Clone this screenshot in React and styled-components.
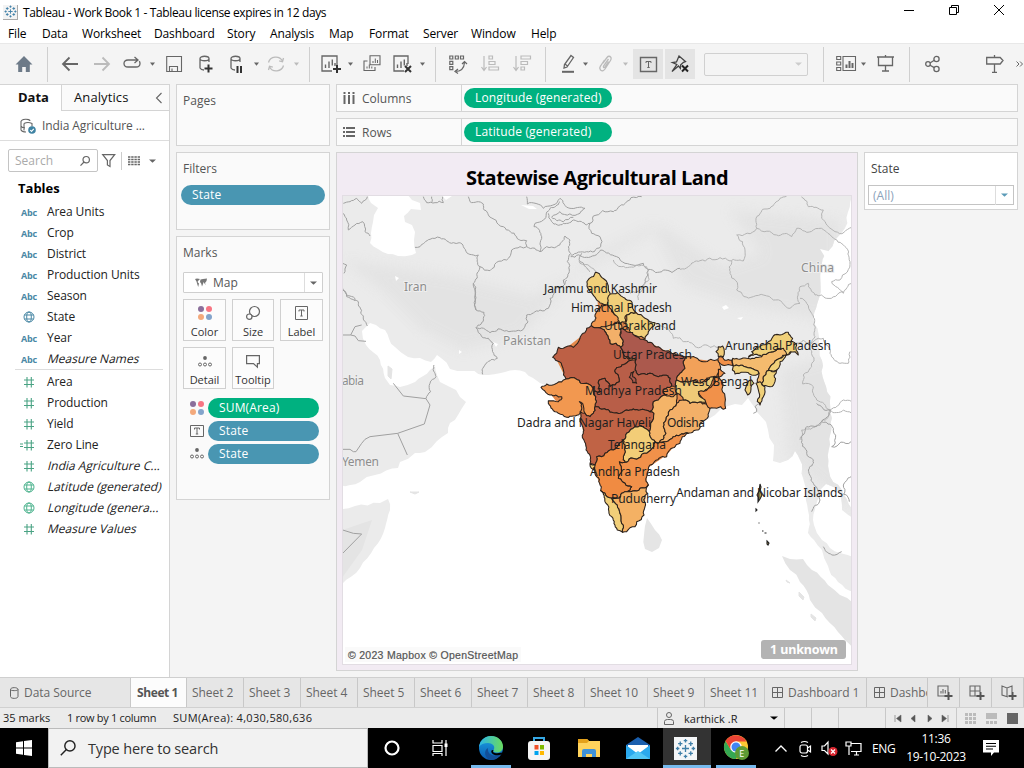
import React from 'react';
import styled, { createGlobalStyle, css } from 'styled-components';

const Global = createGlobalStyle`
  * { box-sizing: border-box; }
  body { margin: 0; overflow: hidden; background: #f4f4f4; }
`;

const ui = '"Open Sans", "Noto Sans", sans-serif';
const line = '#d4d4d4';

const Screen = styled.div`
  width: 1024px; height: 768px; display: flex; flex-direction: column;
  font-family: ${ui}; font-size: 12px; color: #333; background: #f4f4f4;
  white-space: nowrap; overflow: hidden;
`;
const Svg = styled.svg`
  display: block; flex: none; overflow: visible; fill: none;
  stroke: ${p => p.$c || '#666'}; stroke-width: ${p => p.$sw || 1.3};
`;
const Ico = ({ w = 18, h = 18, ...p }) => <Svg width={w} height={h} viewBox={`0 0 ${w} ${h}`} {...p} />;

/* window chrome */
const TitleBar = styled.header`
  height: 24px; flex: none; display: flex; align-items: center; background: #fff; color: #000;
  padding: 0 20px 0 3px; gap: 5px; letter-spacing: -0.37px;
`;
const AppBadge = styled.div`
  width: 15px; height: 15px; display: grid; place-items: center; background: #f3f3f3;
  border-right: 1px solid #aaa; border-bottom: 1px solid #aaa;
`;
const WinButtons = styled.div`
  margin-left: auto; display: flex; align-items: center; gap: 35px; padding-bottom: 4px;
`;
const MenuBar = styled.nav`
  height: 19px; flex: none; display: flex; background: #fff; color: #000; padding-left: 8px;
`;
const MenuItem = styled.span`
  width: ${p => p.$w}px; line-height: 20px; letter-spacing: -0.13px;
`;
const Toolbar = styled.div`
  height: 41px; flex: none; display: flex; align-items: center; border-top: 1px solid #e8e8e8;
`;
const Tool = styled.div`
  width: ${p => p.$w}px; margin-left: ${p => p.$gap}px; flex: none;
  display: flex; align-items: center; justify-content: center; height: 18px;
`;
const Separator = styled.div`
  width: 1px; height: 35px; flex: none; margin-left: ${p => p.$gap}px; background: #cfcfcf;
`;
const Pressed = styled.div`
  width: 30px; height: 30px; flex: none; margin-left: ${p => p.$gap}px; background: #e4e4e4;
  display: grid; place-items: center;
`;
const FitSelect = styled.div`
  width: 104px; height: 23px; flex: none; margin-left: 9px; border: 1px solid #d0d0d0; border-radius: 2px;
  display: flex; align-items: center; justify-content: flex-end; padding-right: 5px;
`;

/* workspace */
const Workspace = styled.div` height: 593px; flex: none; display: flex; `;
const DataPane = styled.aside`
  width: 170px; flex: none; background: #fff; border-right: 1px solid ${line}; color: #222;
`;
const PaneTabs = styled.div` height: 27px; display: flex; `;
const PaneTab = styled.div`
  font-size: 13px; color: #111; line-height: 25px; border-top: 1px solid ${line};
  ${p => p.$active ? css`
    width: 61px; padding-left: 18px; font-weight: 700; background: #fff;
  ` : css`
    flex: 1; padding: 0 7px 0 12px; background: #fafafa; border-left: 1px solid ${line}; border-bottom: 1px solid ${line};
    display: flex; align-items: center; justify-content: space-between; letter-spacing: 0.1px;
  `}
`;
const Source = styled.div`
  height: 30px; display: flex; align-items: center; gap: 6px; padding-left: 20px;
  border-bottom: 1px solid #ddd; color: #555; letter-spacing: -0.1px;
`;
const SearchRow = styled.div` display: flex; align-items: center; padding: 8px 0 0 8px; height: 31px; `;
const SearchBox = styled.div`
  width: 90px; height: 23px; border: 1px solid #c4c4c4; border-radius: 2px; color: #aaa;
  display: flex; align-items: center; justify-content: space-between; padding: 0 7px 0 6px; margin-right: 4px;
`;
const ThinRule = styled.div` width: 1px; height: 18px; background: #ccc; margin: 0 6px 0 5px; `;
const TablesTitle = styled.div`
  font-size: 13px; font-weight: 700; color: #000; padding-left: 18px; height: 29px; line-height: 33px;
`;
const Fields = styled.div`
  ${p => p.$ruled && css`
    margin: 0 6px 0 15px; border-top: 1px solid #ddd; padding-top: 1px;
    & > div { margin-left: -15px; }
  `}
`;
const Field = styled.div` height: 21px; display: flex; align-items: center; padding-left: 20px; gap: 9px; `;
const FieldName = styled.span`
  display: inline-block; letter-spacing: -0.08px;
  ${p => p.$slanted && css` transform: skewX(-14deg); letter-spacing: 0.02px; padding-left: 1px; `}
`;
const Abc = styled.span`
  width: 18px; font-size: 9px; font-weight: 700; color: #4a88a5; text-align: center; padding-top: 2px; letter-spacing: -0.2px;
`;
const FieldIcon = styled.span` width: 18px; display: grid; place-items: center; `;

const Shelves = styled.div` width: 154px; margin-left: 6px; flex: none; display: flex; flex-direction: column; gap: 6px; `;
const Card = styled.section`
  height: ${p => p.$h}px; flex: none; background: #fafafa; border: 1px solid ${line}; padding: 0 4px;
`;
const CardTitle = styled.div` height: 32px; line-height: 31px; padding-left: 2px; color: #555; `;
const Pill = styled.div`
  height: 20px; border-radius: 10px; width: ${p => p.$w}px; line-height: 20px; padding-left: 11px;
  background: ${p => p.$green ? '#00b180' : '#4996b2'}; color: #fff; letter-spacing: ${p => p.$ls || 0.15}px;
`;
const MarkType = styled.div`
  margin: 3px 2px 0; width: 140px; height: 21px; border: 1px solid #cfcfcf; border-radius: 1px; background: #fff;
  display: flex; align-items: center; padding-left: 11px; gap: 6px; color: #555;
`;
const MarkCaret = styled.div`
  margin-left: auto; width: 18px; height: 19px; border-left: 1px solid #ddd; display: grid; place-items: center;
`;
const MarkButtons = styled.div`
  display: grid; grid-template-columns: 43px 42px 43px; gap: 6px; margin: 6px 2px 7px;
`;
const MarkButton = styled.div`
  height: 42px; border: 1px solid #d0d0d0; background: #fcfcfc; display: flex; flex-direction: column;
  align-items: center; justify-content: space-between; padding-top: 6px; font-size: 11px; line-height: 17px; color: #333;
`;
const Encoding = styled.div` display: flex; align-items: center; height: 23px; padding-left: 9px; gap: 4px; `;

const Main = styled.main` margin-left: 6px; width: 682px; display: flex; flex-direction: column; gap: 6px; `;
const Shelf = styled.div`
  height: 28px; flex: none; border: 1px solid ${line}; background: #fafafa; display: flex; align-items: center; color: #555;
`;
const ShelfName = styled.div`
  width: 125px; height: 26px; border-right: 1px solid ${line}; display: flex; align-items: center;
  gap: 7px; padding-left: 6px; margin-right: 2px;
`;
const Stage = styled.div` display: flex; gap: 6px; `;
const Sheet = styled.section`
  width: 522px; height: 519px; border: 1px solid ${line}; background: #f2ebf3; padding: 0 5px;
`;
const SheetTitle = styled.h1`
  margin: 0; height: 42px; text-align: center; font: 700 20px/49px ${ui}; color: #000; letter-spacing: -0.5px;
`;
const MapFrame = styled.div` width: 510px; height: 470px; border: 1px solid #e2dde3; background: #fff; overflow: hidden; `;
const MapSvg = styled.svg`
  display: block; font-family: "Noto Sans", "Open Sans", sans-serif;
  .state { stroke: #2c221c; stroke-width: 3.2; stroke-linejoin: round; }
`;
const FilterCard = styled.section` width: 154px; height: 58px; border: 1px solid ${line}; background: #fff; padding: 0 2px 0 3px; `;
const FilterTitle = styled.div` height: 32px; line-height: 31px; padding-left: 3px; color: #444; `;
const FilterSelect = styled.div`
  width: 146px; height: 20px; border: 1px solid #c4c4c4; display: flex; align-items: center; padding-left: 4px; color: #8ca3bb;
`;

/* footer */
const SheetTabs = styled.div`
  height: 31px; flex: none; display: flex; background: #e6e6e6; border-top: 1px solid #cfcfcf; border-bottom: 1px solid #d0d0d0;
`;
const SheetTab = styled.div`
  width: ${p => p.$w}px; flex: none; height: 29px; border-right: 1px solid #c8c8c8; overflow: hidden;
  display: flex; align-items: center; gap: 5px; padding-left: ${p => p.$pl ?? 5}px; color: #666; letter-spacing: -0.05px;
  ${p => p.$active && css` background: #fcfcfc; font-weight: 700; color: #555; letter-spacing: -0.4px; `}
`;
const Status = styled.div`
  height: 20px; flex: none; display: flex; background: #ebebeb; color: #222; font-size: 11px; line-height: 19px; padding-left: 3px;
`;
const Stat = styled.span` width: ${p => p.$w}px; letter-spacing: ${p => p.$ls || 0}px; `;
const Cell = styled.div`
  width: ${p => p.$w}px; border-left: 1px solid #c8c8c8; display: flex; align-items: center; gap: ${p => p.$gap || 0}px;
  padding: 0 ${p => p.$px || 0}px; flex: none;
`;
const Grow = styled.span` flex: 1; `;

const Taskbar = styled.footer` height: 40px; flex: none; display: flex; align-items: center; background: #000; color: #fff; `;
const Task = styled.div`
  width: ${p => p.$w}px; height: 40px; flex: none; display: grid; place-items: center;
  background: ${p => p.$on ? '#333' : 'transparent'};
  box-shadow: ${p => p.$run ? 'inset 0 -3px #76b9ed' : 'none'};
  margin-left: ${p => p.$ml || 0}px;
`;
const TaskSearch = styled.div`
  width: 320px; height: 40px; flex: none; background: #f2f2f2; border: 1px solid #bbb; color: #333; font-size: 14.5px;
  display: flex; align-items: center; gap: 12px; padding-left: 11px; letter-spacing: -0.17px;
`;
const Clock = styled.div`
  width: 62px; flex: none; margin-left: 7px; text-align: center; line-height: 18px; font-size: 12px; letter-spacing: -0.3px;
`;
const Lang = styled.div` width: 26px; flex: none; margin-left: 10px; font-size: 12px; letter-spacing: -0.4px; `;

/* small drawings */
const Caret = ({ c = '#666', s = 5 }) => (
  <Ico w={s} h={4} $c="none"><path d={`M0 .5h${s}L${s / 2} 3.8z`} fill={c} /></Ico>
);
const Plus = ({ x, y, c = '#333' }) => <path d={`M${x - 4} ${y}h8M${x} ${y - 4}v8`} stroke={c} strokeWidth="2" />;
const Cylinder = () => <path d="M2 3.5C2 .5 11 .5 11 3.5S2 6.500 2 3.500V13q1 2 4 2M11 3.500V7" />;
const TBox = ({ w = 14, h = 12, sw }) => (
  <Ico w={w} h={h} $sw={sw || 1}>
    <path d={`M.5 .5h${w - 1}v${h - 1}H.5z`} />
    <path d={`M${w / 2 - 2.5} ${h / 2 - 1.5}v-1.500h5v1.500M${w / 2} ${h / 2 - 3}v6M${w / 2 - 1.2} ${h / 2 + 3}h2.400`} strokeWidth="1" />
  </Ico>
);
const sparkPath = 'M12 8v8M8 12h8M12 1v4M10 3h4M12 19v4M10 21h4M1 12h4M3 10v4M19 12h4M21 10v4M6 4v5M3.500 6.500h5M18 4v5M15.500 6.500h5M6 15v5M3.500 17.500h5M18 15v5M15.500 17.500h5';
const Spark = ({ s = 15 }) => (
  <Svg width={s} height={s} viewBox="0 0 24 24" $c="#3f7fa8" $sw="1.7"><path d={sparkPath} /></Svg>
);
const Colors = () => (
  <Ico w={14} h={14} $c="none">
    <circle cx="3" cy="3" r="3" fill="#8b6f9b" /><circle cx="11" cy="3" r="3" fill="#f77583" />
    <circle cx="3" cy="11" r="3" fill="#f3a97c" /><circle cx="11" cy="11" r="3" fill="#83a4cb" />
  </Ico>
);
const Dots = ({ h = 11, y = 0 }) => (
  <Ico w={14} h={h} $sw="1">
    <circle cx="7" cy={2 + y} r="1.900" fill="#666" stroke="none" />
    <circle cx="2" cy={8.5 + y} r="1.500" /><circle cx="7" cy={8.5 + y} r="1.500" /><circle cx="12" cy={8.5 + y} r="1.500" />
  </Ico>
);
const Hash = ({ eq }) => (
  <Ico w={18} h={12} $c="#4aa384" $sw="1.100">
    <path d="M4 4h10M4 8.500h10M7 1v10.500M11.300 1v10.500" />{eq && <path d="M0 5h3M0 7.500h3" />}
  </Ico>
);
const Globe = ({ c }) => (
  <Ico w={12} h={12} $c={c} $sw="1"><circle cx="6" cy="6" r="5" /><ellipse cx="6" cy="6" rx="2.300" ry="5" /><path d="M1.500 4h9M1.500 8h9" /></Ico>
);
const Lens = ({ c = '#666', s = 10 }) => (
  <Svg width={s} height={s} viewBox="0 0 10 10" $c={c} $sw={s > 12 ? 0.9 : 1.2}><circle cx="6.200" cy="3.700" r="3.200" /><path d="M4 6L.5 9.600" /></Svg>
);
const SheetGlyph = ({ mark }) => (
  <Ico w={20} h={18}>
    <path d={mark ? 'M11 16H1V1h14v8' : 'M11 16H1V1h15v9'} />
    <path d="M4.500 9.500v3.500M8 6.500v6.500M11.300 4.500v6M14 8v3" strokeWidth="1.400" />
    {mark ? <path d="M12 11l6 6M18 11l-6 6" stroke="#333" strokeWidth="2" /> : <Plus x={16} y={14} />}
  </Ico>
);
const DashGlyph = () => <Ico w={11} h={11} $sw="1"><path d="M.5 .5h10v10H.5zM5.500 .5v10M.5 5.500h10" /></Ico>;

const tools = {
  home: <Ico $c="none"><path d="M9 1L.5 9.500h2.700V17h4v-5h3.600v5h4V9.500h2.700z" fill="#6d7a88" /></Ico>,
  back: <Ico w={16} $sw="1.800"><path d="M16 9H1M7.500 2.500L1 9l6.500 6.500" /></Ico>,
  fwd: <Ico w={16} $sw="1.800" $c="#bbb"><path d="M0 9h15M8.500 2.500L15 9l-6.500 6.500" /></Ico>,
  loop: <Ico $sw="1.300"><path d="M14 5H5Q1 5 1 8.500T5 12h8q4 0 4-3.500 0-1.500-.8-2.200M11.500 2L15 5l-3.500 3" /></Ico>,
  save: <Ico w={16}><path d="M.7 1.500h14.800v15H.7zM3.500 16v-4.500h8V16M6 16v-2.500" strokeWidth="1.100" /></Ico>,
  dbAdd: <Ico w={14}><Cylinder /><Plus x={10.5} y={13.5} /></Ico>,
  dbPause: <Ico w={14}><Cylinder /><path d="M8.500 11v7M12 11v7" stroke="#333" strokeWidth="2" /></Ico>,
  refresh: <Ico $c="#bbb"><path d="M1.500 7.500A7.500 7 0 0 1 15.500 6M16.500 10.500A7.500 7 0 0 1 2.500 12M16.500 3l-1 3.800-3.300-1M1.500 15l1-3.800 3.300 1" /></Ico>,
  add: <SheetGlyph />,
  dup: <Ico $sw="1.100"><path d="M7 .8h10v9H7zM4.500 6H1v9.500h11V12" /><path d="M10 8V6M12.300 8V3.500M14.500 8V5M4 13.500v-2M6.300 13.500v-4M8.800 13.500v-2" strokeWidth="1" /></Ico>,
  clear: <SheetGlyph mark />,
  swap: <Ico $sw="1.200"><path d="M.8 1h3v3h-3zM6.300 1h3v3h-3zM11.500 1h3v3h-3zM.8 6.300h3v3h-3zM.8 11.700h3v3h-3zM6 16.500q9 0 9.500-9M13 9l2.500-2.500L18 9M9 14l-3 2.500 3 2" /></Ico>,
  asc: <Ico $c="#bbb" $sw="1.200"><path d="M3 1v14M.5 12L3 15.500 5.500 12M8 1h3.500v3H8zM8 6.500h6v3H8zM8 12h9.500v3H8z" /></Ico>,
  desc: <Ico $c="#bbb" $sw="1.200"><path d="M3 1v14M.5 12L3 15.500 5.500 12M8 1h9.500v3H8zM8 6.500h6.500v3H8zM8 12h3.500v3H8z" /></Ico>,
  pen: <Ico w={14}><path d="M10 .5l2.500 2L6 12l-3 1 .5-3.500zM4 9l2.500 2" /><path d="M1 16.800h12" strokeWidth="2" /></Ico>,
  clip: <Ico w={13} $c="#bbb"><path d="M4 8l4-5.500q2-2.500 4 0 .5 1.500-.5 3L6 14q-2 3-4.500 1-1.500-2 0-4l4-6M9.500 4L4.500 11q-.5 2 1 1.500l4-6" /></Ico>,
  cards: <Ico w={20}><path d="M.7 1.500h4v3h-4zM.7 7h4v3h-4zM.7 12.500h4v3h-4zM7 1.500h12.500v14H7z" strokeWidth="1.100" /><path d="M10.500 13V9.500M13.500 13V6M16.500 13V8" strokeWidth="2" /></Ico>,
  present: <Ico w={17} $sw="1.300"><path d="M0 2h17M1.500 2v8.500h14V2M8.500 0v2M8.500 10.500v5M5 16h7" /></Ico>,
  share: <Ico w={15}><circle cx="3" cy="9" r="2.300" /><circle cx="11.500" cy="4" r="2.600" /><circle cx="11.500" cy="14" r="2.600" /><path d="M5 8l4.300-2.700M5 10.200l4.300 2.400" /></Ico>,
  sign: <Ico w={18}><path d="M.7 2.500h13.500l2.800 3-2.800 3.500H.7zM8.500 0v2.500M8.500 9v8M6 17.300h5" /></Ico>,
  more: <Ico w={7} $sw="1"><path d="M.5 6.500L3 9 .5 11.500M4 6.500L6.500 9 4 11.500" /></Ico>,
  caret: <Caret />, caretOff: <Caret c="#bbb" />,
};
const T = ({ n, gap, w }) => <Tool $gap={gap} $w={w}>{tools[n]}</Tool>;

/* map geometry: edges are roughened by a midpoint displacement that is
   independent of direction, so neighbouring regions share their borders */
const hash = (a, b, c, d) => {
  const v = Math.sin(a * 12.9898 + b * 78.233 + c * 37.719 + d * 11.131) * 43758.5453;
  return (v - Math.floor(v)) * 2 - 1;
};
function split(a, b, k, out) {
  const dx = b[0] - a[0], dy = b[1] - a[1], len = Math.hypot(dx, dy);
  if (len < 9) { out.push(b); return; }
  const flip = a[0] > b[0] || (a[0] === b[0] && a[1] > b[1]);
  const [p, q] = flip ? [b, a] : [a, b];
  const r = hash(p[0], p[1], q[0], q[1]) * k * (flip ? -1 : 1);
  const m = [(a[0] + b[0]) / 2 - dy * r, (a[1] + b[1]) / 2 + dx * r];
  split(a, m, k, out); split(m, b, k, out);
}
function rough(str, closed, k = 0.2) {
  const n = str.trim().split(/[\s,]+/).map(Number);
  const pts = [];
  for (let i = 0; i < n.length; i += 2) pts.push([n[i], n[i + 1]]);
  if (closed) pts.push(pts[0]);
  const out = [pts[0]];
  for (let i = 1; i < pts.length; i++) split(pts[i - 1], pts[i], k, out);
  return 'M' + out.map(p => p[0].toFixed(1) + ' ' + p[1].toFixed(1)).join('L') + (closed ? 'Z' : '');
}
const Area = ({ p, fill, k = 0.12 }) => <path d={rough(p, true, k)} fill={fill} />;
const State = ({ p, fill }) => <path className="state" d={rough(p, true, 0.2)} fill={fill} />;
const Frame = ({ x, y, lines, c }) => (
  <g transform={`translate(${x} ${y}) scale(.33333)`} fill="none" stroke={c || '#a0a0a0'} strokeWidth="3">
    {lines.map((l, i) => <path key={i} d={rough(l, false, 0.2)} />)}
  </g>
);
const Straight = ({ x, y, lines }) => (
  <g transform={`translate(${x} ${y}) scale(.33333)`} fill="none" stroke="#a0a0a0" strokeWidth="3">
    {lines.map((l, i) => <polyline key={i} points={l} />)}
  </g>
);
const westAsia = [
  '40,370 60,365 80,355 95,370 112,350', '38,400 50,420 55,450 75,435 98,425 105,455 120,468',
  '280,350 290,368 340,368 338,350', '305,350 305,368',
  '415,350 420,365 460,372 475,405 520,440 560,470 590,482 590,500',
  '255,502 270,500 300,478 330,473 370,488 400,500 430,525 445,525 450,560 480,572 530,540 545,510 570,500 590,500 615,505 630,515 650,500 680,500 705,468 720,480 722,520 712,545 718,570 700,600 705,615',
  '450,560 445,575 430,610 435,630 438,690', '630,515 635,470 612,440 615,430 640,420 660,385 690,365',
  '590,350 592,372 640,385 690,355 720,385 765,385 750,400 690,395 665,412 700,425 730,412',
  '655,400 665,425 700,430 770,435 780,430 790,408 850,395 880,375 935,350',
  '780,430 785,460 810,470 812,500 770,515 722,525', '722,530 812,510 860,530 885,550 940,550 955,568 1000,570 1050,565',
  '755,520 750,545 780,575', '955,568 945,600 935,620 900,640', '38,550 50,555 42,580', '38,630 50,650 75,662',
];
const gulf = [
  '710,0 705,12 675,25 660,55 655,85 630,90 590,105 583,143 530,152 480,158 438,143 460,115 462,97 438,90 435,60 430,10',
  '38,25 50,45 85,65 92,100 112,138', '438,143 455,170 490,190 502,235 468,250 458,283', '288,356 300,310 318,290 312,255',
];
const arabia = [
  '38,165 62,165 75,140 95,135', '62,165 75,168 85,182 108,184', '190,310 220,348 288,356 300,375 283,432 203,460 120,470 105,478 95,490 78,515 70,515 60,508 38,508',
  '203,460 232,525', '38,750 70,760 95,762 38,820',
];
const china = [
  '0,268 25,260 60,242 120,233 150,243 190,243 195,210 170,165 230,145 240,100 270,85 300,55 320,48',
  '230,145 290,165 335,170 350,145 400,150 455,170 495,200 510,245 480,300 455,305 490,340 515,310',
  '365,50 385,80 430,90 425,115 465,155 515,142', '155,243 150,280 170,330 220,350 280,360 330,385 360,370 360,320 385,310 405,345 440,355 490,335',
  '360,355 380,370 395,400 405,470 395,490 395,560 370,585 368,612 400,620 410,660 450,690 490,660 515,665',
  '395,490 430,475 450,520 480,550 505,550 510,515',
  '515,700 490,690 450,690 430,720 365,750 360,780', '340,490 370,480 395,490',
];
const indochina = [
  '545,65 500,80 485,115 500,160 520,180 505,210 520,250 540,300 515,335', '545,65 570,30 530,10', '545,65 580,85 575,140 633,125',
  '633,230 610,255 628,305', '550,440 575,465 605,455', '360,10 345,20 350,35 340,40',
];
const himalaya = [
  '375,188 400,200 430,235 465,245 500,262 540,262 565,262',
  '250,0 275,20 320,15 355,30 340,80 325,120', '200,35 180,20 150,10 148,0',
];
const mainland = '196,50 240,110 300,140 360,190 345,240 440,290 565,305 575,400 540,440 470,515 410,585 352,625 345,735 315,795 280,812 240,740 200,650 160,520 150,460 110,465 60,400 110,360 75,290 190,200 205,150';
const states = [
  ['#f1cf79', '196,37 215,52 235,78 241,105 250,118 232,135 215,130 200,120 180,95 171,78 178,55'],
  ['#f1cf79', '241,102 262,98 285,115 302,122 308,145 318,158 290,165 286,185 268,188 255,165 240,150 232,130'],
  ['#f1cf79', '290,165 318,158 345,175 375,188 355,215 345,238 320,228 300,215 288,195'],
  ['#f29850', '215,135 232,135 245,155 262,170 268,188 250,195 240,205 215,200 205,203 184,197 195,165 203,150'],
  ['#f3b069', '205,203 215,200 250,195 268,188 275,195 270,225 280,245 272,262 258,250 240,250 225,215'],
  ['#bd6045', '184,197 205,203 225,215 240,250 258,250 272,262 282,275 290,292 308,300 285,312 255,330 265,345 268,365 240,380 225,355 208,360 212,395 190,395 170,370 140,358 108,357 100,330 88,305 68,292 85,262 100,265 130,262 150,235 170,205'],
  ['#ab594d', '272,205 290,215 320,230 345,240 385,260 415,272 440,285 470,290 460,310 465,325 450,340 440,360 438,378 425,378 420,355 385,350 360,340 325,345 315,330 318,298 300,295 285,290 272,262 280,245 270,225'],
  ['#b85e48', '308,300 318,298 315,330 325,345 360,340 385,350 420,355 425,378 400,388 405,405 385,420 370,425 360,455 330,450 290,450 250,458 215,448 195,440 197,410 190,395 212,395 208,360 225,355 240,380 268,365 265,345 255,330 285,312'],
  ['#f29850', '108,357 140,358 170,370 190,395 197,410 195,440 190,460 180,470 165,460 158,430 148,425 150,460 130,468 110,472 85,460 55,430 55,422 85,425 95,410 60,405 38,388 33,382 50,372 80,370'],
  ['#c06345', '195,440 215,448 250,458 290,450 330,450 360,455 372,460 362,490 358,515 345,505 315,500 290,520 280,540 270,548 250,570 225,580 200,590 195,615 180,610 168,570 160,520 150,485 150,455 165,460 180,470 190,460'],
  ['#f4b468', '385,420 405,405 430,410 442,400 440,430 420,450 408,480 400,500 408,520 385,550 375,545 358,515 362,490 372,460 360,455 370,425'],
  ['#f3b068', '440,430 460,420 480,430 510,425 540,445 535,470 525,480 505,510 470,518 430,530 408,545 385,550 408,520 400,500 408,480 420,450'],
  ['#f3cd77', '290,520 315,500 345,505 358,515 375,545 372,560 350,580 325,595 285,607 280,590 285,560 280,540'],
  ['#f1914a', '375,545 385,550 408,545 430,530 470,518 475,520 450,550 415,575 410,590 370,610 355,625 350,650 355,675 330,685 285,695 300,690 305,680 285,670 265,655 275,635 268,605 285,607 325,595 350,580 372,560'],
  ['#f08b42', '280,540 285,560 280,590 285,607 268,605 275,635 265,655 285,670 305,680 300,690 285,695 275,700 265,715 245,715 225,700 212,692 200,650 192,625 195,615 200,590 225,580 250,570 270,548'],
  ['#efcf7a', '180,612 195,615 192,630 184,625'],
  ['#f1cf79', '212,692 225,700 245,715 262,735 270,760 275,790 278,817 262,810 245,770 225,725'],
  ['#f4b164', '285,695 330,685 355,675 352,700 345,740 342,765 320,785 315,800 290,815 278,817 275,790 270,760 262,735 245,715 265,715 275,700'],
  ['#f2a159', '470,290 520,305 565,300 570,330 560,350 520,365 490,362 440,360 450,340 465,325 460,310'],
  ['#efca77', '438,378 440,360 490,362 520,365 555,350 545,370 505,400 530,420 535,430 510,425 480,430 460,420 442,400'],
  ['#ab594d', '303,338 312,334 308,350 318,358 320,370 308,368 298,352'],
];
const northEast = [
  ['#f1914a', '118,530 155,540 160,558 140,555 115,545'],
  ['#f1914a', '115,568 135,580 120,590 105,590 107,605 85,625 55,635 75,660 90,685 110,685 122,680 130,688 137,685 135,650 128,620 122,600 115,590'],
  ['#efca77', '115,500 128,498 133,515 130,530 115,530 108,515'],
  ['#f4bb6e', '158,535 200,535 245,530 280,515 310,505 340,490 350,495 320,525 300,535 285,543 265,575 262,572 250,590 243,612 232,605 237,580 225,570 195,560 160,558'],
  ['#f0d079', '215,515 240,500 260,490 280,468 300,465 325,457 338,475 332,485 350,495 355,525 345,515 320,525 310,505 280,515 245,530 205,532 220,520'],
  ['#f0d079', '160,558 195,560 225,570 237,580 215,585 165,582 157,570'],
  ['#f0d079', '285,543 300,535 318,525 300,545 298,560 285,572 265,575'],
  ['#f0d079', '262,572 290,570 285,605 270,620 243,612 250,590'],
  ['#f0d079', '228,610 240,605 255,620 250,650 240,675 232,665'],
  ['#f0d079', '200,615 215,600 222,610 212,635 203,645 195,630'],
];
const places = [
  ['Jammu and Kashmir', 544, 293, 113], ['Himachal Pradesh', 571, 312, 101], ['Uttarakhand', 604, 330, 72],
  ['Uttar Pradesh', 613, 359, 79], ['Madhya Pradesh', 585, 395, 97], ['Dadra and Nagar Haveli', 517, 427, 134],
  ['Odisha', 667, 427, 38], ['West Bengal', 681, 386, 71], ['Arunachal Pradesh', 725, 350, 106], ['Telangana', 608, 449, 58],
  ['Andhra Pradesh', 590, 476, 90], ['Puducherry', 611, 503, 65], ['Andaman and Nicobar Islands', 676, 497, 167],
];
const countries = [['Iran', 404, 291, 23], ['Pakistan', 503, 345, 48], ['China', 801, 272, 33], ['abia', 342, 385, 22], ['Yemen', 342, 466, 37]];
const LAND = `340,192 855,192 855,519 842,510 836,488 826,484 820,490 816,505 814,525 822,540 830,548 840,553 855,558 855,592 838,582
 828,566 822,550 814,540 808,533 809,515 806,495 803,478 800,460 795,451 788,460 780,463 773,461 774,445 768,430 766,422 757,412
 752,404 748,398 742,405 735,404 728,406 700,420 640,460 630,510 620,520 600,470 585,420 545,385 540,383 533,378 525,372 505,372
 483,375 465,371 450,369 441,358 437,355 431,362 420,358 408,357 395,347 385,330 376,325 370,323 362,331 366,345 380,360 385,378
 390,385 400,387 415,382 430,370 435,366 437,375 440,382 456,390 466,402 458,415 450,423 448,433 437,441 425,452 415,453 400,462
 398,468 375,475 360,482 340,485`;

const IndiaMap = () => (
  <MapSvg width="508" height="468" viewBox="343 196 508 468">
    <defs>
      <filter id="relief"><feGaussianBlur stdDeviation="6" /></filter>
      <clipPath id="landClip"><path d={rough(LAND, true, 0.12)} /></clipPath>
    </defs>
    <path d={rough(LAND, true, 0.12)} fill="#ebebeb" />
    <g clipPath="url(#landClip)"><g fill="#e1e1e1" filter="url(#relief)" opacity=".75">
      <path d="M342 260l40 30 40 40 40 20 60-15 70-80 60-30 30 60 60 20 160 30V196h-30l-20 60-70-10-60 20-60-40-70 40-60 30-80-20-70-10z" />
      <path d="M780 370l70-20v160l-60-50zM730 210l110 10v40l-60 20z" />
    </g></g>
    <Area fill="#ebebeb" p="342,509 355,506 380,503 388,499 390,510 385,528 374,548 360,568 342,584" />
    <path d="M342 530l30-10-10 30-20 28z" fill="#e4e4e4" />
    <Area fill="#fff" p="368,194 371,203 378,208 374,215 373,222 371,233 370,243 378,249 388,254 398,256 412,255 416,253 414,240 415,232 412,225 405,222 404,216 411,209 421,210 420,203 412,200 407,194" />
    <Area fill="#e5e5e5" p="647,518 655,530 662,540 659,548 652,552 645,549 644,535" />
    <Area fill="#e4e4e4" p="782,556 790,559 803,559 812,570 828,585 840,595 853,603 853,648 838,632 822,613 810,600 800,582 790,570" />
    <path d="M786 580l4 3-3-1zM799 592l5 5-1 3-4-4zM811 614l5 4-1 3-4-4zM410 492l9 0-4 2zM388 366l4 3-1 10-3-3z" fill="#e4e4e4" stroke="#e4e4e4" />
    <path d="M820 249l8 2 3 5-6 1zM722 307l4-2 3 3-5 2zM737 318l6-1-2 3zM395 276l4 2-3 3zM459 350l3 2-3 2zM521 205l12 1 4 3-8 0zM493 342l5 2-2 3zM442 196h10l-6 4z" fill="#fff" />
    <Frame x={330} y={80} lines={westAsia} />
    <Frame x={330} y={280} lines={gulf} />
    <Straight x={330} y={280} lines={arabia} />
    <Frame x={680} y={180} lines={china} c="#b4b4b4" />
    <Frame x={640} y={400} lines={indochina} />
    <Frame x={530} y={260} lines={himalaya} c="#b4b4b4" />
    <g transform="translate(530 260) scale(.33333)">
      <polygon points={mainland} fill="#e58a4c" />
      {states.map(([f, p], i) => <State key={i} fill={f} p={p} />)}
    </g>
    <g transform="translate(680 180) scale(.33333)">{northEast.map(([f, p], i) => <State key={i} fill={f} p={p} />)}</g>
    <g fill="#b99b4a" stroke="#222" strokeWidth="1.1">
      <path d="M760 484l1 3-1 4 2 4-2 4-2 3 0-5-1-2 2-4zM759 497l-1 5M756 509l1 1-1 1zM767 541l2 2-1 2-1-1z" />
      <path d="M758.500 523h1M762 531h1.500M764.500 533h2" />
    </g>
    <g fontSize="12" fill="#8d8d8d" stroke="#eee" strokeWidth="2" paintOrder="stroke">
      {countries.map(([t, x, y, w]) => <text key={t} x={x} y={y} textLength={w}>{t}</text>)}
    </g>
    <g fontSize="12" fill="#1f1f1f">
      {places.map(([t, x, y, w]) => <text key={t} x={x} y={y} textLength={w}>{t}</text>)}
    </g>
    <rect x="345" y="647" width="176" height="15" fill="#fafafa" />
    <text x="348" y="659" textLength="170" fontSize="10.500" fill="#555" stroke="#555" strokeWidth=".2" fontFamily="Liberation Sans, sans-serif">© 2023 Mapbox © OpenStreetMap</text>
    <rect x="761" y="640" width="85" height="19" rx="3" fill="#b3b3b3" />
    <text x="770" y="654" textLength="68" fontSize="12.500" fontWeight="700" fill="#fff">1 unknown</text>
  </MapSvg>
);

const dims = [['Area Units'], ['Crop'], ['District'], ['Production Units'], ['Season'], ['State', 'geo'], ['Year'], ['Measure Names', 'abc', 1]];
const measures = [['Area'], ['Production'], ['Yield'], ['Zero Line', 'eq'], ['India Agriculture C...', '', 1], ['Latitude (generated)', 'geo', 1], ['Longitude (genera...', 'geo', 1], ['Measure Values', '', 1]];
const menus = [['File', 34], ['Data', 40], ['Worksheet', 72], ['Dashboard', 73], ['Story', 43], ['Analysis', 59], ['Map', 40], ['Format', 54], ['Server', 48], ['Window', 60], ['Help', 40]];
const sheetTabs = [['Sheet 2', 57], ['Sheet 3', 57], ['Sheet 4', 57], ['Sheet 5', 57], ['Sheet 6', 57], ['Sheet 7', 56], ['Sheet 8', 57], ['Sheet 10', 63], ['Sheet 9', 57], ['Sheet 11', 60]];

export default function App() {
  return (
    <Screen>
      <Global />
      <TitleBar>
        <AppBadge><Spark s={13} /></AppBadge>
        <span>Tableau - Work Book 1 - Tableau license expires in 12 days</span>
        <WinButtons>
          <Ico w={10} h={10} $c="#000" $sw="1"><path d="M0 5.500h10" /></Ico>
          <Ico w={10} h={10} $c="#000" $sw="1"><path d="M.5 2.500h7v7h-7zM2.500 2.500v-2h7v7h-2" /></Ico>
          <Ico w={10} h={10} $c="#000" $sw="1"><path d="M0 0l10 10M10 0L0 10" /></Ico>
        </WinButtons>
      </TitleBar>
      <MenuBar>{menus.map(([m, w]) => <MenuItem key={m} $w={w}>{m}</MenuItem>)}</MenuBar>
      <Toolbar>
        <T n="home" gap={15} w={18} /><Separator $gap={14} />
        <T n="back" gap={14} w={16} /><T n="fwd" gap={16} w={16} /><T n="loop" gap={13} w={18} /><T n="caret" gap={9} w={5} />
        <T n="save" gap={11} w={16} /><T n="dbAdd" gap={16} w={14} /><T n="dbPause" gap={17} w={14} /><T n="caret" gap={11} w={5} />
        <T n="refresh" gap={8} w={18} /><T n="caretOff" gap={9} w={5} /><Separator $gap={10} />
        <T n="add" gap={11} w={20} /><T n="caret" gap={7} w={5} /><T n="dup" gap={10} w={18} /><T n="clear" gap={12} w={20} />
        <T n="caret" gap={7} w={5} /><Separator $gap={10} />
        <T n="swap" gap={13} w={18} /><T n="asc" gap={14} w={18} /><T n="desc" gap={14} w={18} /><Separator $gap={14} />
        <T n="pen" gap={15} w={14} /><T n="caret" gap={8} w={5} /><T n="clip" gap={11} w={13} /><T n="caretOff" gap={11} w={5} />
        <Pressed $gap={5}><TBox w={17} h={15} sw={1.4} /></Pressed>
        <Pressed $gap={2}><Ico $c="#444"><path d="M8 1l6.500 5.500-2 .8-2.800 2.500-.3 3.500L7.500 11 1 16.500 5.800 9.500 1.500 7.500l4-.6z" /><path d="M11 10.500l6 6M17 10.500l-6 6" stroke="#222" strokeWidth="2" /></Ico></Pressed>
        <FitSelect><Caret c="#ccc" s={7} /></FitSelect><Separator $gap={15} />
        <T n="cards" gap={12} w={20} /><T n="caret" gap={5} w={5} /><T n="present" gap={11} w={17} /><Separator $gap={15} />
        <T n="share" gap={15} w={15} /><T n="sign" gap={46} w={18} /><T n="more" gap={12} w={7} />
      </Toolbar>

      <Workspace>
        <DataPane>
          <PaneTabs>
            <PaneTab $active>Data</PaneTab>
            <PaneTab><span>Analytics</span><Ico w={6} h={10} $sw="1.100"><path d="M5.500 0L.5 5l5 5" /></Ico></PaneTab>
          </PaneTabs>
          <Source>
            <Ico w={16} h={16} $sw="1.100"><path d="M1 4C1 .5 10 .5 10 3M1 3v9q1 2 5 2M1 8q1 2 4 2M4 5.500q4-2 8 0v3M4 5.500v7" /><circle cx="12" cy="12" r="3.800" fill="#3f83a3" stroke="none" /><path d="M10.200 12l1.300 1.400 2.300-2.600" stroke="#fff" /></Ico>
            <span>India Agriculture ...</span>
          </Source>
          <SearchRow>
            <SearchBox>Search<Lens /></SearchBox>
            <Ico w={14} h={13} $sw="1.200"><path d="M.7 .7h12L8 6.500v6l-2.600-1.500V6.500z" /></Ico>
            <ThinRule />
            <Ico w={13} h={10} $sw="1"><path d="M0 1h12M0 3.500h12M0 6h12M0 8.500h12" strokeDasharray="2.400 .8" strokeWidth="1.300" /></Ico>
            <Tool $gap={8} $w={7}><Caret s={7} /></Tool>
          </SearchRow>
          <TablesTitle>Tables</TablesTitle>
          <Fields>
            {dims.map(([t, k, it]) => (
              <Field key={t}>{k === 'geo' ? <FieldIcon><Globe c="#4a88a5" /></FieldIcon> : <Abc>Abc</Abc>}<FieldName $slanted={it}>{t}</FieldName></Field>
            ))}
          </Fields>
          <Fields $ruled>
            {measures.map(([t, k, it]) => (
              <Field key={t}><FieldIcon>{k === 'geo' ? <Globe c="#4db38e" /> : <Hash eq={k === 'eq'} />}</FieldIcon><FieldName $slanted={it}>{t}</FieldName></Field>
            ))}
          </Fields>
        </DataPane>

        <Shelves>
          <Card $h={62}><CardTitle>Pages</CardTitle></Card>
          <Card $h={78}><CardTitle>Filters</CardTitle><Pill $w={144}>State</Pill></Card>
          <Card $h={264}>
            <CardTitle>Marks</CardTitle>
            <MarkType>
              <Ico w={12} h={9} $c="none"><path d="M0 1l2-.5 3 .5-1.500 1.500L2.500 4 4 5.500 3.200 9 2.200 6 1.500 3.500zM5.500 1.500L8 1l4-.5-.5 2.500-1.500 2 .8 2-1.300-1.500L8.500 4 8 6 7 8.500 6.200 5.500 5 4z" fill="#777" /></Ico>
              Map<MarkCaret><Caret s={7} /></MarkCaret>
            </MarkType>
            <MarkButtons>
              <MarkButton><Colors />Color</MarkButton>
              <MarkButton><Ico w={14} h={14} $sw="1.200"><circle cx="8.500" cy="5.500" r="5" /><circle cx="3.300" cy="10.700" r="2.700" fill="#fcfcfc" /></Ico>Size</MarkButton>
              <MarkButton><TBox w={13} h={14} />Label</MarkButton>
              <MarkButton><Dots h={14} y={2} />Detail</MarkButton>
              <MarkButton><Ico w={14} h={14} $sw="1.200"><path d="M.6 1.600h12.800v8h-2v3.500L7.500 9.600H.6z" /></Ico>Tooltip</MarkButton>
            </MarkButtons>
            <Encoding><Colors /><Pill $w={111} $green>SUM(Area)</Pill></Encoding>
            <Encoding><TBox /><Pill $w={111}>State</Pill></Encoding>
            <Encoding><Dots /><Pill $w={111}>State</Pill></Encoding>
          </Card>
        </Shelves>

        <Main>
          <Shelf>
            <ShelfName><Ico w={12} h={12} $sw="2"><path d="M1.500 3v9M6 3v9M10.500 3v9M1.500 0v2M6 0v2M10.500 0v2" /></Ico>Columns</ShelfName>
            <Pill $w={148} $green>Longitude (generated)</Pill>
          </Shelf>
          <Shelf>
            <ShelfName><Ico w={12} h={12} $sw="2"><path d="M3 2h9M3 6h9M3 10h9M0 2h2M0 6h2M0 10h2" /></Ico>Rows</ShelfName>
            <Pill $w={148} $green>Latitude (generated)</Pill>
          </Shelf>
          <Stage>
            <Sheet>
              <SheetTitle>Statewise Agricultural Land</SheetTitle>
              <MapFrame><IndiaMap /></MapFrame>
            </Sheet>
            <FilterCard>
              <FilterTitle>State</FilterTitle>
              <FilterSelect>(All)<MarkCaret><Caret s={7} c="#5b9bb8" /></MarkCaret></FilterSelect>
            </FilterCard>
          </Stage>
        </Main>
      </Workspace>

      <SheetTabs>
        <SheetTab $w={131} $pl={10}><Ico w={9} h={12} $sw="1"><path d="M.5 2.500C.5 0 8 0 8 2.500V9.500C8 12 .5 12 .5 9.500zM.5 2.500C.5 4 8 4 8 2.500" /></Ico>Data Source</SheetTab>
        <SheetTab $w={56} $active $pl={6}>Sheet 1</SheetTab>
        {sheetTabs.map(([t, w]) => <SheetTab key={t} $w={w}>{t}</SheetTab>)}
        <SheetTab $w={102} $pl={7}><DashGlyph />Dashboard 1</SheetTab>
        <SheetTab $w={61} $pl={7}><DashGlyph />Dashboard 2</SheetTab>
        <SheetTab $w={32} $pl={9}><Ico w={15} h={15} $sw="1.100"><path d="M8 11H1V1h10v6M4 8.500V6M6 8.500V4M8.300 8.500V5" /><Plus x={11.5} y={11} c="#555" /></Ico></SheetTab>
        <SheetTab $w={32} $pl={9}><Ico w={15} h={15} $sw="1.100"><path d="M8 11H1V1h10v6M6 1v10M1 6h10" /><Plus x={11.5} y={11} c="#555" /></Ico></SheetTab>
        <SheetTab $w={32} $pl={9}><Ico w={15} h={15} $sw="1.100"><path d="M7 12L1 10V1l5 2 5-2v6M6 3v9" /><Plus x={11.5} y={11} c="#555" /></Ico></SheetTab>
      </SheetTabs>
      <Status>
        <Stat $w={64}>35 marks</Stat><Stat $w={106} $ls={-0.3}>1 row by 1 column</Stat><Stat $w={484} $ls={0.33}>SUM(Area): 4,030,580,636</Stat>
        <Cell $w={127} $gap={10} $px={6}><Ico w={10} h={13} $sw="1"><circle cx="5" cy="3" r="2.500" /><path d="M.5 12.500v-3q0-2 3-2h3q3 0 3 2v3z" /></Ico>karthick .R<Grow /><Caret s={8} c="#000" /></Cell>
        <Cell $w={27} /><Cell $w={27} /><Cell $w={47} />
        <Cell $w={71} $gap={9} $px={8}>
          {['M1 1v7M7 1v7L2.500 4.500z', 'M5 1v7L1 4.500z', 'M2 1v7l4-3.500z', 'M6 1v7M0 1v7l4.500-3.500z'].map(d => <Ico key={d} w={7} h={9} $sw=".6"><path d={d} fill="#555" /></Ico>)}
        </Cell>
        <Cell $w={68} $gap={10} $px={8}>
          <Ico w={11} h={11} $c="#bbb" $sw="3"><path d="M0 1.500h11M0 5.500h11M0 9.500h11" strokeDasharray="3 1" /></Ico>
          <Ico w={11} h={11} $c="#bbb"><path d="M0 3h11" strokeWidth="6" /><path d="M0 9.500h11" strokeWidth="3" strokeDasharray="3 1" /></Ico>
          <Ico w={11} h={11} $c="none"><rect width="11" height="11" fill="#666" /></Ico>
        </Cell>
      </Status>

      <Taskbar>
        <Task $w={48}><Ico w={16} h={16} $c="none"><path d="M0 2.200l7-1V7.500H0zM8 1l8-1v7.500H8zM0 8.500h7v6.300l-7-1zM8 8.500h8V16l-8-1.100z" fill="#fff" /></Ico></Task>
        <TaskSearch><Lens c="#222" s={16} />Type here to search</TaskSearch>
        <Task $w={48}><Ico w={16} h={16} $c="#fff" $sw="2.200"><circle cx="8" cy="8" r="6.500" /></Ico></Task>
        <Task $w={48}><Ico w={17} h={16} $c="#fff" $sw="1.200"><path d="M1 0v3h9V0M1 5.500h9v6H1zM1 16v-2.500h9V16M14 0v16" /><path d="M14 3.500v3.500" strokeWidth="3" /></Ico></Task>
        <Task $w={40} $ml={7} $run>
          <Ico w={24} h={24} $c="none">
            <defs>
              <linearGradient id="eg" x1="0" x2="1"><stop stopColor="#2bb5ea" /><stop offset="1" stopColor="#6adb5c" /></linearGradient>
              <linearGradient id="eb" x1="0" x2="0" y1="0" y2="1"><stop stopColor="#1aa3e6" /><stop offset="1" stopColor="#0b5ab0" /></linearGradient>
            </defs>
            <circle cx="12" cy="12" r="12" fill="url(#eb)" />
            <path d="M0 11C1 4 6 0 12 0c7 0 12 5 12 10.500 0 4-3 6-6 6-3 0-4-1-3.500-2.300C17 10 13 7 9 7 5 7 1.500 8.500 0 11z" fill="url(#eg)" />
            <path d="M9 12c-1 6 5 10 13 6-3 5-8 6-11 6-5-2-7-9-2-12z" fill="#124f98" />
            <path d="M14.500 14.200C13 16 15 17.300 18 17.300l5.500-.8-1 2c-4 1.500-8 .8-9.800-1.500-1.200-2 .2-3.300 1.800-2.800z" fill="#000" />
          </Ico>
        </Task>
        <Task $w={44} $ml={6}><Ico w={24} h={24} $c="none"><path d="M7 5V2h10v3" stroke="#35a7e4" strokeWidth="2" /><rect x="1" y="5" width="22" height="19" rx="3" fill="#f5f5f5" /><path d="M7.500 9h4v4.500h-4z" fill="#f0512a" /><path d="M13 9h4v4.500h-4z" fill="#7fba00" /><path d="M7.500 15h4v4h-4z" fill="#00a4ef" /><path d="M13 15h4v4h-4z" fill="#ffb900" /></Ico></Task>
        <Task $w={44} $ml={6}><Ico w={22} h={20} $c="none"><path d="M0 1h9l2 2h11v16H0z" fill="#ffd35c" /><path d="M0 1h9l2 2-2 2H0z" fill="#e4a11b" /><path d="M4 19v-6q0-2 2-2h10q2 0 2 2v6h-4v-3H8v3z" fill="#3f92d8" /></Ico></Task>
        <Task $w={44} $ml={5}><Ico w={24} h={24} $c="none"><path d="M0 9L12 1l12 8v4H0z" fill="#1a5fae" /><path d="M2 9h20v8H2z" fill="#fff" /><path d="M0 9l12 9 12-9v14H0z" fill="#2ba9ee" /><path d="M0 23l12-8 12 8z" fill="#52c6f5" /></Ico></Task>
        <Task $w={44} $ml={3} $on $run>
          <Ico w={23} h={23} $c="#3f7fa8" $sw="1.500"><rect width="23" height="23" fill="#f4f6f8" stroke="none" /><path d={sparkPath} transform="translate(1 1) scale(.875)" /></Ico>
        </Task>
        <Task $w={4} $on $run />
        <Task $w={40} $ml={5} $run>
          <Ico w={26} h={26} $c="none"><circle cx="13" cy="12" r="12" fill="#fcc934" /><path d="M2.600 6A12 12 0 0 0 13 24l5-9H8z" fill="#34a853" /><path d="M2.600 6A12 12 0 0 1 23.400 6.500L13 6.500 8 15z" fill="#ea4335" /><circle cx="13" cy="12" r="5.800" fill="#fff" /><circle cx="13" cy="12" r="4.500" fill="#4285f4" /><circle cx="19" cy="18" r="7" fill="#5e9b35" /><text x="16.300" y="21.500" fontSize="9" fill="#fff">E</text></Ico>
        </Task>
        <Task $w={12} $ml={19}><Ico w={12} h={7} $c="#fff"><path d="M.5 6.500L6 1l5.500 5.500" /></Ico></Task>
        <Task $w={14} $ml={11}><Ico w={13} h={17} $c="#fff" $sw="1.200"><rect x="1" y="5" width="7.500" height="8" rx="2" /><path d="M8.500 8l3-2v6l-3-2M2 2.500Q5.500 .500 9 2.500M2 15.500q3.500 2 7 0" /></Ico></Task>
        <Task $w={17} $ml={9}><Ico w={17} h={16} $c="#fff" $sw="1.200"><path d="M1 6h2.500L7 2v12L3.500 10.500H1z" /><circle cx="12" cy="11.500" r="4.500" fill="#d8262f" stroke="none" /><path d="M10 9.500l4 4M14 9.500l-4 4" /></Ico></Task>
        <Task $w={17} $ml={7}><Ico w={17} h={15} $c="#fff" $sw="1.200"><path d="M6 2.500h10v8H6M4 5v9M1 1h5v4H1zM9 14h5M11.500 10.500V14" /></Ico></Task>
        <Lang>ENG</Lang>
        <Clock>11:36<br />19-10-2023</Clock>
        <Task $w={16} $ml={16}><Ico w={16} h={16} $c="none"><path d="M0 0h16v12.500h-5L8 16v-3.500H0z" fill="#fff" /><path d="M3 3.500h10M3 6.300h10M3 9h7" stroke="#000" strokeWidth="1.100" /></Ico></Task>
      </Taskbar>
    </Screen>
  );
}
